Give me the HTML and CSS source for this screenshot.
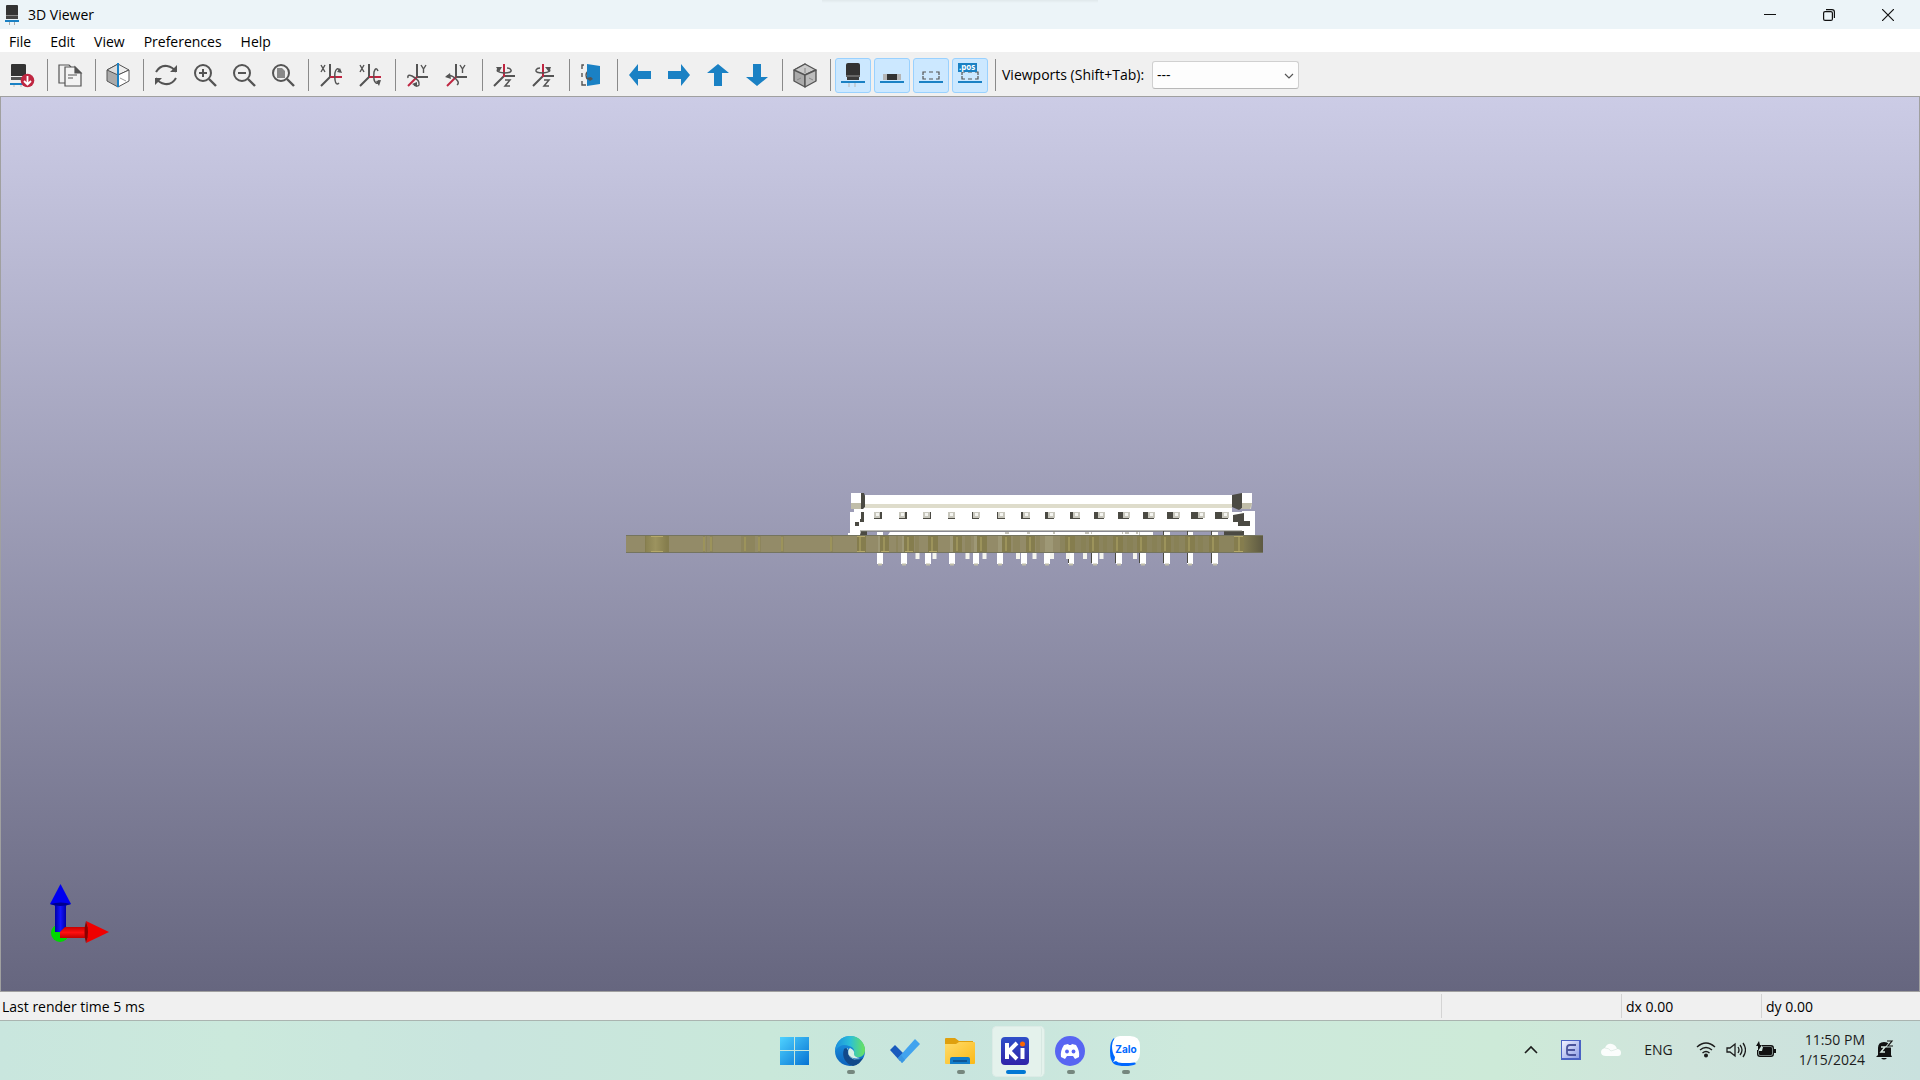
FILE: index.html
```html
<!DOCTYPE html>
<html lang="en">
<head>
<meta charset="utf-8">
<title>3D Viewer</title>
<link rel="stylesheet" href="styles.css">
</head>
<body>
<svg class="defs" aria-hidden="true">
  <defs>
    <linearGradient id="via"><stop offset="0" stop-color="#8a8252"/><stop offset=".45" stop-color="#9c935f"/><stop offset="1" stop-color="#857d4d"/></linearGradient>
    <linearGradient id="edge"><stop offset="0" stop-color="#8a8354"/><stop offset="1" stop-color="#5d5942"/></linearGradient>
    <linearGradient id="blueShaft"><stop offset="0" stop-color="#0000a8"/><stop offset=".5" stop-color="#1414ff"/><stop offset="1" stop-color="#0000a8"/></linearGradient>
    <linearGradient id="redShaft" x2="0" y2="1"><stop offset="0" stop-color="#c80000"/><stop offset=".5" stop-color="#ff1010"/><stop offset="1" stop-color="#c00000"/></linearGradient>
    <linearGradient id="win" x2="1" y2="1"><stop offset="0" stop-color="#4fd2ff"/><stop offset="1" stop-color="#0673d3"/></linearGradient>
    <linearGradient id="edgeTop"><stop offset="0" stop-color="#1b8ede"/><stop offset=".5" stop-color="#2bbfd8"/><stop offset="1" stop-color="#6be35a"/></linearGradient>
    <linearGradient id="edgeMid" x2="0" y2="1"><stop offset="0" stop-color="#1e9be6"/><stop offset="1" stop-color="#0c62bb"/></linearGradient>
    <linearGradient id="folder" x2="1" y2="1"><stop offset="0" stop-color="#ffdc6b"/><stop offset="1" stop-color="#fbb917"/></linearGradient>
    <linearGradient id="ki" x2="0" y2="1"><stop offset="0" stop-color="#2f4fc9"/><stop offset="1" stop-color="#3023a8"/></linearGradient>
    <linearGradient id="lang" x2="1" y2="1"><stop offset="0" stop-color="#f2f2ff"/><stop offset="1" stop-color="#8f9fe6"/></linearGradient>
    <symbol id="rotX" viewBox="0 0 24 24"><path d="M11 1v13L2 23" fill="none" stroke="#545454" stroke-width="2"/><path d="M11 14h12" stroke="#bf2641" stroke-width="2"/><path d="M2 2l4 7M6 2L2 9" stroke="#545454" stroke-width="1.4"/></symbol>
    <symbol id="rotY" viewBox="0 0 24 24"><path d="M11 1v13h11" fill="none" stroke="#545454" stroke-width="2"/><path d="M11 14l-9 9" stroke="#bf2641" stroke-width="2"/><path d="M15 2l2.500 4L20 2M17.500 6v4" fill="none" stroke="#545454" stroke-width="1.400"/></symbol>
    <symbol id="rotZ" viewBox="0 0 24 24"><path d="M1 23l10-10h11" fill="none" stroke="#545454" stroke-width="2"/><path d="M11 1v13" stroke="#bf2641" stroke-width="2"/><path d="M12 17h5l-5 6h5" fill="none" stroke="#545454" stroke-width="1.500"/></symbol>
    <symbol id="lens" viewBox="0 0 24 24"><circle cx="10" cy="10" r="8" fill="none" stroke="#545454" stroke-width="2"/><path d="M16 16l7 7" stroke="#545454" stroke-width="2.400"/></symbol>
    <symbol id="arrow" viewBox="0 0 24 24"><path d="M1 12L10 1v7h13v8H10v7z" fill="#1a81c4"/></symbol>
  </defs>
</svg>

<div class="app">
  <header class="titlebar">
    <svg class="app-icon" viewBox="0 0 14 20"><path d="M4.500 16v4M9.500 16v4" stroke="#aaa"/><path d="M1 1q0-1 1-1h10q1 0 1 1v9H1z" fill="#333"/><path d="M1 10h12v1H1z" fill="#888"/><path d="M1 11h12v3H1z" fill="#444"/><path d="M0 15h14v2H0z" fill="#1a81c4"/></svg>
    <h1 class="title">3D Viewer</h1>
    <span class="snap-hint"></span>
    <div class="window-buttons">
      <button class="window-button" aria-label="Minimize"><svg width="12" height="12"><path d="M0 5.500h12" stroke="#111"/></svg></button>
      <button class="window-button" aria-label="Restore"><svg width="12" height="12" fill="none" stroke="#111" stroke-width="1.200"><rect x=".6" y="2.600" width="8.800" height="8.800" rx="1.500"/><path d="M3 .6h6q2.400 0 2.400 2.400v6"/></svg></button>
      <button class="window-button" aria-label="Close"><svg width="12" height="12"><path d="M0 0l12 12M12 0L0 12" stroke="#111" stroke-width="1.200"/></svg></button>
    </div>
  </header>

  <nav class="menubar">
    <button class="menu">File</button><button class="menu">Edit</button><button class="menu">View</button><button class="menu">Preferences</button><button class="menu">Help</button>
  </nav>

  <div class="toolbar">
    <button class="tool" aria-label="Reload board"><svg viewBox="0 0 24 24"><path d="M1 2q0-1 1-1h12q2 0 2 1v11H1z" fill="#333"/><path d="M1 14h15v3H1z" fill="#555"/><path d="M0 20h15v2H0z" fill="#1a81c4"/><path d="M4 22v2M11 22v2" stroke="#bbb"/><circle cx="17.500" cy="17.500" r="6.800" fill="#bf2641"/><path d="M17.500 13v8M14 18l3.500 3.500L21 18" fill="none" stroke="#fff" stroke-width="1.800"/></svg></button>
    <span class="sep"></span>
    <button class="tool" aria-label="Copy image"><svg viewBox="0 0 24 24" fill="none" stroke="#545454" stroke-width="1.200"><path d="M7 20H1V2h10l2 2"/><path d="M7 4h10l6 6v13H7z" fill="#f3f3f3"/><path d="M17 4v6h6z" fill="#545454"/><path d="M10 12h9M10 15h5"/></svg></button>
    <span class="sep"></span>
    <button class="tool" aria-label="Raytracing"><svg viewBox="0 0 24 24" stroke="#545454" stroke-width="1"><path d="M12 1L1 7v11l11 6z" fill="#aaa"/><path d="M12 1L1 7l11 5z" fill="#ddd"/><path d="M12 1l11 6-11 5z" fill="#eee"/><path d="M23 7v11l-11 6V12z" fill="#fff"/><path d="M14 15l6 3" stroke="#999"/><path d="M12 0v24" stroke="#1a81c4" stroke-width="2"/></svg></button>
    <span class="sep"></span>
    <button class="tool" aria-label="Refresh"><svg viewBox="0 0 24 24" fill="none" stroke="#545454" stroke-width="2"><path d="M2 9Q6 2 13 3q6 1 9 6M22 15q-4 7-11 6-6-1-9-6"/><path d="M23 2v7h-7zM1 22v-7h7z" fill="#545454" stroke="none"/></svg></button>
    <button class="tool" aria-label="Zoom in"><svg viewBox="0 0 24 24"><use href="#lens"/><path d="M10 6v8M6 10h8" stroke="#545454" stroke-width="2"/></svg></button>
    <button class="tool" aria-label="Zoom out"><svg viewBox="0 0 24 24"><use href="#lens"/><path d="M6 10h8" stroke="#545454" stroke-width="2"/></svg></button>
    <button class="tool" aria-label="Zoom to fit"><svg viewBox="0 0 24 24"><use href="#lens"/><path d="M6 5h5l3 3v7H6z" fill="#888"/></svg></button>
    <span class="sep"></span>
    <button class="tool" aria-label="Rotate X clockwise"><svg viewBox="0 0 24 24"><use href="#rotX"/><path d="M20 20q-3 3-4-3-1-9 2-11 2-1 3 3" fill="none" stroke="#545454" stroke-width="1.500"/><path d="M18 9l5 1-2-5z" fill="#545454"/></svg></button>
    <button class="tool" aria-label="Rotate X counterclockwise"><svg viewBox="0 0 24 24"><use href="#rotX"/><path d="M20 8q-2-5-4 1-1 9 2 11 3 1 3-3" fill="none" stroke="#545454" stroke-width="1.500"/><path d="M18 18l5-1-2 6z" fill="#545454"/></svg></button>
    <span class="sep"></span>
    <button class="tool" aria-label="Rotate Y clockwise"><svg viewBox="0 0 24 24"><use href="#rotY"/><path d="M2 15q-1-4 4-2 8 4 7 9-1 2-5 0" fill="none" stroke="#545454" stroke-width="1.500"/><path d="M6 21l5-2v5z" fill="#545454"/></svg></button>
    <button class="tool" aria-label="Rotate Y counterclockwise"><svg viewBox="0 0 24 24"><use href="#rotY"/><path d="M12 22q3-2-1-6-5-5-9-3" fill="none" stroke="#545454" stroke-width="1.500"/><path d="M0 14l5-4 1 6z" fill="#545454"/></svg></button>
    <span class="sep"></span>
    <button class="tool" aria-label="Rotate Z clockwise"><svg viewBox="0 0 24 24"><use href="#rotZ"/><path d="M5 6q-3 3 6 4 8 0 7-3-1-2-4-2" fill="none" stroke="#545454" stroke-width="1.500"/><path d="M3 4h6l-3 5z" fill="#545454"/></svg></button>
    <button class="tool" aria-label="Rotate Z counterclockwise"><svg viewBox="0 0 24 24"><use href="#rotZ"/><path d="M17 6q3 3-6 4-8 0-7-3 1-2 4-2" fill="none" stroke="#545454" stroke-width="1.500"/><path d="M13 4h6l-2 5z" fill="#545454"/></svg></button>
    <span class="sep"></span>
    <button class="tool" aria-label="Flip board"><svg viewBox="0 0 24 24"><path d="M4 2H2v4M2 18v4h4M2 10v4M8 8q-4 4 0 9" fill="none" stroke="#545454" stroke-width="1.400"/><path d="M7 1l13 2v18L7 23z" fill="#1a81c4"/><path d="M6 15l4 3 3-2-2-2z" fill="#545454"/></svg></button>
    <span class="sep"></span>
    <button class="tool" aria-label="Move left"><svg viewBox="0 0 24 24"><use href="#arrow"/></svg></button>
    <button class="tool" aria-label="Move right"><svg viewBox="0 0 24 24"><use href="#arrow" transform="rotate(180 12 12)"/></svg></button>
    <button class="tool" aria-label="Move up"><svg viewBox="0 0 24 24"><use href="#arrow" transform="rotate(90 12 12)"/></svg></button>
    <button class="tool" aria-label="Move down"><svg viewBox="0 0 24 24"><use href="#arrow" transform="rotate(-90 12 12)"/></svg></button>
    <span class="sep"></span>
    <button class="tool" aria-label="Orthographic projection"><svg viewBox="0 0 24 24" stroke="#545454" stroke-width="1.400" stroke-linejoin="round"><path d="M12 1L1 7v11l11 6z" fill="#aaa"/><path d="M12 1L1 7l11 5 11-5z" fill="#c9c9c9"/><path d="M23 7v11l-11 6V12z" fill="#bcbcbc"/><path d="M12 5v5M4 17l4-2M20 17l-4-2" stroke="#888" stroke-width="1"/></svg></button>
    <span class="sep"></span>
    <div class="toggles">
      <button class="tool on" aria-label="Through-hole models" aria-pressed="true"><svg viewBox="0 0 24 24"><path d="M8 20v4M14 20v4" stroke="#b5b5b5"/><path d="M5 2q0-2 2-2h10q2 0 2 2v10H5z" fill="#333"/><path d="M5 12h14v2H5z" fill="#666"/><path d="M6 14h12v3H6z" fill="#3a3a3a"/><path d="M0 18h24v2H0z" fill="#1a81c4"/></svg></button>
      <button class="tool on" aria-label="SMD models" aria-pressed="true"><svg viewBox="0 0 24 24"><path d="M3 11h18v6H3z" fill="#b5b5b5"/><path d="M7 11h10v6H7z" fill="#333"/><path d="M0 18h24v2H0z" fill="#1a81c4"/></svg></button>
      <button class="tool on" aria-label="Virtual models" aria-pressed="true"><svg viewBox="0 0 24 24"><path d="M4 12V9h3M10 9h4M17 9h3v3M4 13v3h3M10 16h4M17 16h3v-3" fill="none" stroke="#545454" stroke-width="1.200"/><path d="M0 18h24v2H0z" fill="#1a81c4"/></svg></button>
      <button class="tool on" aria-label="Models not in position file" aria-pressed="true"><svg viewBox="0 0 24 24"><path d="M4 12V9h3M10 9h4M17 9h3v3M4 13v3h3M10 16h4M17 16h3v-3" fill="none" stroke="#545454" stroke-width="1.200"/><path d="M0 18h24v2H0zM0 0h19v9H0z" fill="#1a81c4"/><text x="1" y="7" class="pos">.pos</text></svg></button>
    </div>
    <span class="sep"></span>
    <label class="viewports" for="viewports">Viewports (Shift+Tab):</label>
    <span class="select-wrap">
      <select id="viewports" class="select"><option>---</option></select>
      <svg class="caret" width="10" height="6"><path d="M1 1l4 4 4-4" fill="none" stroke="#555" stroke-width="1.200"/></svg>
    </span>
  </div>

  <main class="canvas">
    <svg class="scene" viewBox="1 97 1918 894" role="img" aria-label="Circuit board seen from the side">
      <!-- connector housing -->
      <path d="M851 493h11v3h3v-1h367v17h10v-1h13v24h-19v-4H867v4h-19v-2h2v-21h4v-3h-3z" fill="#fff"/>
      <path d="M865 504h367v4H865zM851 503h11v6h-11zM1241 503h11l-1 6h-10z" fill="#dedccb"/>
      <path d="M851 503h11v6h-11zM1242 503h10l-2 6h-8z" fill="#c0bda9"/>
      <path d="M861 493h3l1 3v11l-2 2h-2zM861 512h3v10h-4v-3h1zM855 522h4v4h-4zM861 531h6v4h-7zM1232 495l10-2v15l-3 2-7-3zM1233 515l11-2v8h6v5h-12v-4h-5zM1224 531h20v4h-20z" fill="#4b4a43"/>
      <path d="M1242 493h10v10h-10z" fill="#fff"/>
      <path d="M890 532h263v3H888z" fill="#fff"/>
      <path d="M860 531h382" stroke="#77766c"/>
      <path d="M999 533h10M1021 533h9M1085 533h8M1119 533h12M1140 532v4M1054 531v3M1137 531v3" stroke="#888675" stroke-dasharray="4 2"/>
      <!-- contact openings -->
      <path d="M874 512h8v7h-8zM899 512h8v7h-8zM923 512h8v7h-8zM948 512h7v7h-7zM972 512h7v7h-7zM997 512h8v7h-8zM1021 512h9v7h-9zM1045 512h9v7h-9zM1070 512h10v7h-10zM1094 512h10v7h-10zM1118 512h11v7h-11zM1143 512h11v7h-11zM1167 512h12v7h-12zM1191 512h12v7h-12zM1215 512h13v7h-13z" fill="#4b4a43"/>
      <path d="M874 512h6v6h-6zM899 512h6v6h-6zM923 512h7v6h-7zM948 512h7v6h-7zM973 512h7v6h-7zM998 512h7v6h-7zM1023 512h7v6h-7zM1048 512h7v6h-7zM1073 512h7v6h-7zM1098 512h7v6h-7zM1123 512h7v6h-7zM1148 512h7v6h-7zM1173 512h7v6h-7zM1198 512h7v6h-7zM1222 512h7v6h-7z" fill="#c8c7bd"/>
      <path d="M876 513h3v3h-3zM901 513h3v3h-3zM925 513h3v3h-3zM950 513h3v3h-3zM975 513h3v3h-3zM1000 513h3v3h-3zM1025 513h3v3h-3zM1050 513h3v3h-3zM1075 513h3v3h-3zM1100 513h3v3h-3zM1125 513h3v3h-3zM1150 513h3v3h-3zM1175 513h3v3h-3zM1200 513h3v3h-3zM1224 513h3v3h-3z" fill="#f4f4f0"/>
      <!-- long contact legs -->
      <g fill="none">
        <path d="M880 532v32M904 532v32M928 532v32M952 532v32M976 532v32M1000 532v32M1024 532v32M1047 532v32M1071 532v32M1095 532v32M1119 532v32M1143 532v32M1167 532v32M1190 532v32M1215 532v32" stroke="#fff" stroke-width="6"/>
        <path d="M1068.500 552v11M1091.500 552v11M1115.500 552v11M1139.500 552v11M1163.500 531v32M1187.500 531v32M1211.500 531v32" stroke="#4b4a43"/>
        <path d="M878 564.500h4M902 564.500h4M926 564.500h4M950 564.500h4M974 564.500h4M998 564.500h4M1022 564.500h4M1045 564.500h4M1069 564.500h4M1093 564.500h4M1117 564.500h4M1141 564.500h4M1165 564.500h4M1188 564.500h4M1213 564.500h4" stroke="#c0bda9" stroke-width="2"/>
        <path d="M917.500 552v7M934.500 552v7M967.500 552v7M984.500 552v7M1018 552v7M1034.500 552v7M1052 552v7M1068 552v7M1085 552v7M1101.500 552v7M1135 552v7" stroke="#f5f5ef" stroke-width="4"/>
      </g>
      <!-- board edge -->
      <path d="M626 535h637v18H626z" fill="#74745f"/>
      <path d="M626 536h637v16H626z" fill="#938b68"/>
      <path d="M878 536h5v16h-5zM902 536h5v16h-5zM950 536h5v16h-5zM974 536h5v16h-5zM998 536h5v16h-5zM1045 536h8v16h-8z" fill="#a5a180" opacity=".6"/>
      <path d="M1060 536h180v16h-180z" fill="#858057" opacity=".6"/>
      <path d="M1240 536h23v16h-23z" fill="url(#edge)"/>
      <g fill="none" stroke="#857d4e" stroke-width="16">
        <path d="M703 544h2M706 544h1M710 544h3M741 544h14M758 544h3M781 544h3M831 544h2M896 544h2M915 544h4M965 544h6M985 544h2M1013 544h7M1036 544h4M1081 544h5M1103 544h4M1127 544h6M1152 544h5M1174 544h5M1198 544h5" opacity=".4"/>
        <path d="M645 544h24M857 544h9M880 544h9M904 544h10M928 544h10M953 544h9M977 544h10M1002 544h9M1026 544h9M1065 544h10M1089 544h10M1113 544h10M1137 544h10M1161 544h10M1185 544h10M1209 544h10M1234 544h10"/>
      </g>
      <path d="M646 536h21v16h-21z" fill="url(#via)"/>
      <path d="M704 537v14M711 537v14M745 537v14M759 537v14M782 537v14M831 537v14M860 537v14M884 537v14M908 537v14M932 537v14M957 537v14M981 537v14M1006 537v14M1030 537v14M1069 537v14M1093 537v14M1117 537v14M1141 537v14M1165 537v14M1189 537v14M1213 537v14M1239 537v14" stroke="#9c935b" stroke-width="2"/>
      <path d="M651 536.500h12M651 551.500h12M857 536.500h8M857 551.500h8M881 551.500h8M905 551.500h8M929 551.500h8M1234 536.500h9M1234 551.500h9" stroke="#b5a86a"/>
    </svg>
    <svg class="axes" viewBox="0 0 62 62" role="img" aria-label="Axis directions">
      <circle cx="11" cy="50" r="9" fill="#00d800"/>
      <path d="M6 22h11v22l-5 5H6z" fill="url(#blueShaft)"/><path d="M11.500 1L22 21q-10 4-21 0z" fill="#0000f0"/><path d="M1 21q10 4 21 0-10-3-21 0z" fill="#00008c"/>
      <path d="M11 49l5-5h23v11H11z" fill="url(#redShaft)"/><path d="M37 38l23 11-23 11q4-11 0-22z" fill="#f00000"/><path d="M37 38q4 11 0 22-3-11 0-22z" fill="#8a0000"/>
    </svg>
  </main>

  <footer class="statusbar">
    <span class="field">Last render time 5 ms</span><span class="field"></span><span class="field">dx 0.00</span><span class="field">dy 0.00</span>
  </footer>
</div>

<div class="taskbar">
  <div class="pinned">
    <button class="task" aria-label="Start"><svg viewBox="0 0 30 30"><path d="M0 1h14v13H0zM15 1h14v13H15zM0 15h14v14H0zM15 15h14v14H15z" fill="url(#win)"/></svg></button>
    <button class="task running" aria-label="Edge"><svg viewBox="0 0 30 30"><circle cx="15" cy="15" r="15" fill="url(#edgeMid)"/><path d="M1 10Q5 0 15 0c10 0 15 8 15 14 0 5-4 8-8 7-3 0-4-2-3-4 1-3-1-6-5-7-5-2-10-1-14 5z" fill="url(#edgeTop)"/><path d="M13 12c-6 4-4 14 4 16 5 1 9-1 11-5-8 3-16-2-15-11z" fill="#cbe6dc"/><path d="M9 13c-3 8 2 15 9 17 5-1 8-4 10-8-8 4-16 0-15-8-1-2-3-2-4-1z" fill="#114a8b"/><path d="M15 12q-3 2-1 7 4 5 11 3-6-1-6-4 1-4-4-6z" fill="#d7efe6"/></svg></button>
    <button class="task" aria-label="To Do"><svg viewBox="0 0 30 30"><path d="M0 14l5-5 10 10-5 6z" fill="#195abd"/><path d="M8 22L25 3l5 5-18 19z" fill="#41a3ee"/><path d="M8 22l4 5 3-3-4-5z" fill="#3a97e2"/></svg></button>
    <button class="task running" aria-label="File Explorer"><svg viewBox="0 0 30 30"><path d="M0 3q0-1 1-1h9l4 3h14v6H0z" fill="#dfa00e"/><path d="M0 8h11l3-2h15q1 0 1 1v20q0 1-1 1H1q-1 0-1-1z" fill="url(#folder)"/><path d="M5 28v-5q0-2 2-2h16q2 0 2 2v5z" fill="#117cc9"/><path d="M8 25h14" stroke="#0b4a86" stroke-width="1.500"/></svg></button>
    <button class="task running active" aria-label="KiCad"><svg viewBox="0 0 30 30"><rect x="1" y="1" width="28" height="28" rx="4" fill="url(#ki)"/><path d="M7 7v16M17 7l-8 8 8 8" fill="none" stroke="#fff" stroke-width="4"/><path d="M22.500 12v11" stroke="#fff" stroke-width="4"/><circle cx="22.500" cy="8" r="2.500" fill="#f60"/></svg></button>
    <button class="task running" aria-label="Discord"><svg viewBox="0 0 30 30"><circle cx="15" cy="15" r="15" fill="#5865f2"/><path d="M9 9l4-1 1 1h2l1-1 4 1q4 6 3 12l-4 2-2-3h-6l-2 3-4-2q-1-6 3-12z" fill="#fff"/><circle cx="12" cy="15.500" r="1.900" fill="#5865f2"/><circle cx="18.500" cy="15.500" r="1.900" fill="#5865f2"/></svg></button>
    <button class="task running" aria-label="Zalo"><svg viewBox="0 0 30 30"><path d="M4 2Q0 5 0 15t4 13q4 2 11 2t11-2z" fill="#0068ff"/><path d="M10 0h10q10 0 10 10v7q0 10-10 10h-8q-4 0-6-2l-3 1q2-2 2-5-3-4-3-11Q3 0 10 0z" fill="#fff"/><text x="16" y="17" text-anchor="middle" class="zalo">Zalo</text></svg></button>
  </div>
  <div class="tray">
    <button class="tray-item" aria-label="Hidden icons"><svg width="14" height="20"><path d="M1 13l6-6 6 6" fill="none" stroke="#1c1c1c" stroke-width="1.600"/></svg></button>
    <button class="tray-item ime" aria-label="Input method"><svg width="20" height="20"><path d="M0 0h20v20H0z" fill="#4a62c4"/><path d="M1 1h17v17H1z" fill="url(#lang)"/><path d="M15 5H9Q6 5 6 8v5q0 2 3 2h6M6 10h8" fill="none" stroke="#4b549c" stroke-width="1.800"/></svg></button>
    <button class="tray-item cloud" aria-label="OneDrive"><svg width="20" height="20"><path d="M5 16q-5 0-5-4 0-3 4-4 2-5 7-4 4 1 5 5 4 0 4 4 0 3-3 3z" fill="#fbfdfc"/><path d="M4 8q4 0 6 3l6-2" fill="none" stroke="#e2eee8"/></svg></button>
    <button class="tray-item lang">ENG</button>
    <button class="tray-item system" aria-label="Network, volume and battery">
      <svg width="20" height="20" fill="none" stroke="#1c1c1c" stroke-width="1.400"><path d="M1 7q9-8 18 0M4 10q6-5 12 0M6.500 13q3.500-3 7 0"/><circle cx="10" cy="15.500" r="1.300" fill="#1c1c1c"/></svg>
      <svg width="20" height="20" fill="none" stroke="#1c1c1c" stroke-width="1.300"><path d="M1 8h3l5-4v12l-5-4H1zM12 7q2 3 0 6M14 5q4 5 0 10M17 3q5 7 0 14"/></svg>
      <svg width="20" height="20"><path d="M6 5.700h9q2.300 0 2.300 2.300v6q0 2.300-2.300 2.300H4q-2.300 0-2.300-2.300v-4" fill="none" stroke="#111" stroke-width="1.400"/><path d="M7 7h8q1 0 1 1v6q0 1-1 1H4q-1 0-1-1v-3h3zM18 9h2v4h-2zM3 1L0 6h2v5l4-6H4z" fill="#111"/></svg>
    </button>
    <button class="tray-item clock"><time datetime="2024-01-15T23:50">11:50 PM<br>1/15/2024</time></button>
    <button class="tray-item bell" aria-label="Notifications"><svg width="18" height="20"><path d="M2 15V8q0-6 6-6 7 0 7 6v7l1 2H0zM5 18h6q-3 3-6 0z" fill="#111"/><path d="M5 7h4l-4 5h4" fill="none" stroke="#d5e6de" stroke-width="1.500"/><path d="M11 1h5l-4 5h5" fill="none" stroke="#cfe3dc" stroke-width="3"/><path d="M11 1h5l-4 5h5" fill="none" stroke="#111" stroke-width="1.200"/></svg></button>
  </div>
</div>
</body>
</html>
```
FILE: styles.css
```css
* { box-sizing: border-box; }
body {
  margin: 0;
  height: 100vh;
  display: flex;
  flex-direction: column;
  font: 14px/20px "Open Sans", "Noto Sans", sans-serif;
  color: #000;
  overflow: hidden;
}
button { border: 0; padding: 0; background: none; font: inherit; color: inherit; }
svg { display: block; flex: none; }
.defs { position: absolute; width: 0; height: 0; }
.app { flex: 1; min-height: 0; display: flex; flex-direction: column; }

.titlebar { position: relative; height: 29px; display: flex; align-items: center; background: #ecf4f8; }
.app-icon { width: 14px; height: 20px; margin: 0 9px 0 5px; }
.title { margin: 0; font-size: 14px; font-weight: 400; }
.snap-hint { position: absolute; top: 0; left: 50%; width: 276px; height: 3px; margin-left: -138px; background: linear-gradient(#e0e8eb, #ecf4f8); }
.window-buttons { margin-left: auto; display: flex; align-self: stretch; gap: 1px; padding-right: 3px; }
.window-button { width: 58px; display: grid; place-items: center; }

.menubar { height: 23px; display: flex; gap: 3px; background: #fff; padding-left: 1px; }
.menu { padding: 0 8px; line-height: 25px; }

.toolbar { height: 44px; display: flex; align-items: center; gap: 3px; padding: 2px 0 0 4px; background: #f0f0f0; }
.tool { width: 36px; height: 35px; display: grid; place-items: center; flex: none; }
.tool svg { width: 24px; height: 24px; overflow: visible; }
.toggles { display: flex; gap: 3px; }
.on { background: #cce8ff; border: 1px solid #99d1ff; border-radius: 3px; }
.pos { font: bold 8px "Open Sans", sans-serif; fill: #fff; }
.sep { width: 6px; height: 32px; flex: none; background: linear-gradient(#8a8a8a, #8a8a8a) 4px 0 / 1px 100% no-repeat; }
.viewports { flex: none; padding: 0 5px 0 2px; }
.select-wrap { position: relative; }
.select { appearance: none; display: block; width: 147px; height: 28px; padding: 0 4px; border: 1px solid #d0d0d0; border-bottom-color: #b8b8b8; border-radius: 3px; background: #fdfdfd; font: inherit; color: #000; }
.caret { position: absolute; right: 5px; top: 12px; }

.canvas { position: relative; flex: 1; min-height: 0; border: 1px solid #a0a0a0; background: linear-gradient(#cccce6, #66667f); }
.scene { width: 100%; height: 100%; }
.axes { position: absolute; left: 48px; bottom: 46px; width: 62px; height: 62px; }

.statusbar { height: 29px; display: grid; grid-template-columns: 1fr 180px 140px 159px; align-items: center; background: #f0f0f0; border-bottom: 1px solid #aab4b0; }
.field { height: 24px; line-height: 26px; padding-left: 4px; border-left: 1px solid #d4d4d4; }
.field:first-child { border-left: 0; padding-left: 2px; }

.taskbar { height: 59px; display: grid; grid-template-columns: 1fr auto 1fr; background: linear-gradient(90deg, #c9e6de, #cbe9dc 12%, #c9e5de 25%, #c9e8da 40%, #c8e5de 50%, #cde9dc 62%, #cdead8 78%, #d0e4dc 88%, #c9e1de); }
.pinned { grid-column: 2; display: flex; }
.task { position: relative; width: 55px; display: grid; place-items: center; }
.task svg { position: relative; width: 30px; height: 30px; }
.running::after { content: ""; position: absolute; bottom: 6px; left: 24px; width: 8px; height: 4px; border-radius: 2px; background: #75877e; }
.active::before { content: ""; position: absolute; top: 5px; left: 4px; width: 48px; height: 49px; border-radius: 5px; border: 1px solid #dcebe6; border-right: 4px double #d7e8e2; background: #e4f2ec; }
.active::after { left: 18px; width: 20px; background: #0078d4; }
.zalo { font: bold 10px Inter, sans-serif; fill: #0068ff; }

.tray { justify-self: end; display: flex; align-items: center; padding: 0 26px 2px 0; color: #1c1c1c; }
.tray-item { display: flex; align-items: center; }
.ime { margin-left: 23px; }
.cloud { margin-left: 20px; }
.lang { margin-left: 23px; }
.system { margin-left: 23px; gap: 10px; }
.clock { margin-left: 23px; text-align: right; }
.bell { margin-left: 11px; }
```
